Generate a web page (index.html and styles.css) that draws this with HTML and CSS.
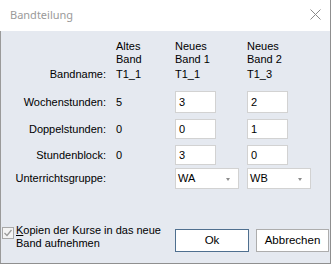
FILE: index.html
```html
<!DOCTYPE html>
<html>
<head>
<meta charset="utf-8">
<link rel="stylesheet" href="styles.css">
</head>
<body>
<div class="window">
  <div class="titlebar">
    <span class="title">Bandteilung</span>
    <svg class="close" width="11" height="11" viewBox="0 0 11 11"><path d="M0.5 0.5 L10.5 10.5 M10.5 0.5 L0.5 10.5" stroke="#8a8a8a" stroke-width="1" fill="none"/></svg>
  </div>
  <div class="content">
    <div class="row row-head">
      <div></div>
      <div>Altes<br>Band</div>
      <div>Neues<br>Band 1</div>
      <div>Neues<br>Band 2</div>
    </div>
    <div class="row row-name">
      <div class="lbl">Bandname:</div>
      <div>T1_1</div>
      <div>T1_1</div>
      <div>T1_3</div>
    </div>
    <div class="row row-week">
      <div class="lbl">Wochenstunden:</div>
      <div>5</div>
      <div class="field">3</div>
      <div class="field">2</div>
    </div>
    <div class="row row-std">
      <div class="lbl">Doppelstunden:</div>
      <div>0</div>
      <div class="field">0</div>
      <div class="field">1</div>
    </div>
    <div class="row row-std">
      <div class="lbl">Stundenblock:</div>
      <div>0</div>
      <div class="field">3</div>
      <div class="field">0</div>
    </div>
    <div class="row row-group">
      <div class="lbl">Unterrichtsgruppe:</div>
      <div></div>
      <div class="select">WA<span class="arrow"></span></div>
      <div class="select">WB<span class="arrow"></span></div>
    </div>
    <div class="footer">
      <div class="check">
        <span class="box"><svg width="10" height="10" viewBox="0 0 10 10"><path d="M1.5 5 L4 7.5 L8.5 2" stroke="#9a9a9a" stroke-width="1.3" fill="none"/></svg></span>
        <span class="check-text"><u>K</u>opien der Kurse in das neue<br>Band aufnehmen</span>
      </div>
      <div class="buttons">
        <div class="btn btn-default">Ok</div>
        <div class="btn">Abbrechen</div>
      </div>
    </div>
  </div>
</div>
</body>
</html>
```

FILE: styles.css
```css
html, body {
  margin: 0;
  padding: 0;
}
body {
  font-family: "Liberation Sans", Arial, sans-serif;
  font-size: 11px;
  line-height: 13px;
  color: #000;
  background: #e5e9f0;
}
.window {
  width: 331px;
  height: 264px;
  box-sizing: border-box;
  display: flex;
  flex-direction: column;
  border-right: 1px solid #8f8f8f;
  border-bottom: 1px solid #8f8f8f;
}
.titlebar {
  height: 31px;
  flex: none;
  background: #fff;
  display: flex;
  align-items: flex-start;
  justify-content: space-between;
  padding: 0 9px 0 10px;
}
.title {
  font-family: "Noto Sans", "Segoe UI", sans-serif;
  font-size: 11px;
  line-height: 15px;
  color: #9a9a9a;
  margin-top: 7px;
}
.close {
  margin-top: 9px;
}
.content {
  flex: 1;
  background: #e5e9f0;
  border-left: 1px solid #9a9a9a;
  display: flex;
  flex-direction: column;
}
.row {
  display: grid;
  grid-template-columns: 105px 49px 62px 64px;
  column-gap: 10px;
  align-items: center;
}
.row-head {
  margin-top: 9px;
  align-items: start;
}
.row-name {
  margin-top: 2px;
}
.row-week {
  margin-top: 10px;
  height: 22px;
}
.row-week .field {
  height: 22px;
}
.row-std {
  margin-top: 6px;
  height: 20px;
}
.row-std .field {
  height: 20px;
}
.row-group {
  margin-top: 3px;
  height: 21px;
}
.lbl {
  text-align: right;
  white-space: nowrap;
}
.field {
  width: 41px;
  box-sizing: border-box;
  background: #fff;
  border: 1px solid #d2d2d2;
  padding-left: 3px;
  display: flex;
  align-items: center;
}
.select {
  width: 64px;
  height: 21px;
  box-sizing: border-box;
  background: #fff;
  border: 1px solid #d2d2d2;
  padding-left: 2px;
  display: flex;
  align-items: center;
  position: relative;
}
.arrow {
  position: absolute;
  right: 8px;
  top: 9px;
  width: 0;
  height: 0;
  border-left: 2.5px solid transparent;
  border-right: 2.5px solid transparent;
  border-top: 3px solid #8c8c8c;
}
.footer {
  margin-top: 35px;
  display: flex;
  align-items: flex-start;
  padding-left: 1px;
}
.check {
  width: 173px;
  display: flex;
  align-items: flex-start;
}
.box {
  width: 12px;
  height: 12px;
  box-sizing: border-box;
  border: 1px solid #a8a8a8;
  background: #f4f4f4;
  margin-top: 3px;
  display: flex;
  align-items: center;
  justify-content: center;
}
.check-text {
  margin-left: 2px;
  white-space: nowrap;
}
.check-text u {
  text-decoration: underline;
}
.buttons {
  display: flex;
  gap: 7px;
  margin-top: 5px;
}
.btn {
  width: 74px;
  height: 23px;
  box-sizing: border-box;
  background: #fff;
  border: 1px solid #adadad;
  display: flex;
  align-items: center;
  justify-content: center;
  font-size: 11.5px;
}
.btn-default {
  border-color: #4f6f8f;
}
.buttons .btn + .btn {
  width: 73px;
}
```
